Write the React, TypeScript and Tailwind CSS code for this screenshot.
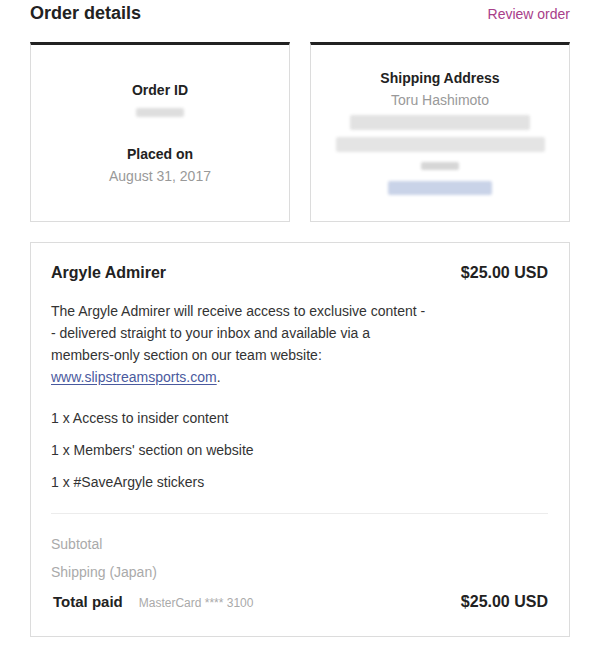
const blurBox = "rounded-[2px] blur-[1.5px]";

function InfoCard({ children }: { children: React.ReactNode }) {
  return (
    <div className="flex h-[180px] flex-1 flex-col items-center justify-center border border-t-[3px] border-[#dcdcdc] border-t-[#222]">
      {children}
    </div>
  );
}

export default function App() {
  return (
    <div className="min-h-[655px] bg-white font-['Liberation_Sans',Arial,sans-serif] text-[14px] text-[#333]">
      <div className="ml-[30px] w-[540px]">
        <div className="mt-[1px] flex items-baseline justify-between">
          <h1 className="text-[18px] font-bold leading-[24px] text-[#222]">Order details</h1>
          <a href="#" className="text-[14px] leading-[24px] text-[#a8408a]">
            Review order
          </a>
        </div>

        <div className="mt-[16px] flex gap-5">
          <InfoCard>
            <div className="font-bold leading-[22px] text-[#222]">Order ID</div>
            <div className="flex h-[22px] items-center">
              <div className={`h-[9px] w-[48px] bg-[#dedede] ${blurBox}`} />
            </div>
            <div className="mt-[20px] font-bold leading-[22px] text-[#222]">Placed on</div>
            <div className="leading-[22px] text-[#999]">August 31, 2017</div>
          </InfoCard>
          <InfoCard>
            <div className="font-bold leading-[22px] text-[#222]">Shipping Address</div>
            <div className="leading-[22px] text-[#999]">Toru Hashimoto</div>
            <div className="flex h-[22px] items-center">
              <div className={`h-[15px] w-[180px] bg-[#e2e2e2] ${blurBox}`} />
            </div>
            <div className="flex h-[22px] items-center">
              <div className={`h-[15px] w-[209px] bg-[#e4e4e4] ${blurBox}`} />
            </div>
            <div className="flex h-[22px] items-center">
              <div className={`h-[8px] w-[38px] bg-[#d6d6d6] ${blurBox}`} />
            </div>
            <div className="flex h-[22px] items-center">
              <div className={`h-[14px] w-[104px] bg-[#c9d3e8] ${blurBox}`} />
            </div>
          </InfoCard>
        </div>

        <div className="mt-5 border border-[#dcdcdc] pb-[20px] pl-5 pr-[21px] pt-[19px]">
          <div className="flex items-baseline justify-between">
            <div className="text-[16px] font-bold leading-[22px] text-[#222]">Argyle Admirer</div>
            <div className="text-[16px] font-bold leading-[22px] text-[#222]">$25.00 USD</div>
          </div>

          <p className="mt-4 leading-[22px]">
            The Argyle Admirer will receive access to exclusive content -<br />
            - delivered straight to your inbox and available via a<br />
            members-only section on our team website:<br />
            <a href="#" className="text-[#4a5a9e] underline underline-offset-2">
              www.slipstreamsports.com
            </a>
            .
          </p>

          <ul className="mt-[14px] leading-[32px]">
            <li>1 x Access to insider content</li>
            <li>1 x Members' section on website</li>
            <li>1 x #SaveArgyle stickers</li>
          </ul>

          <div className="mt-[15px] h-px bg-[#ececec]" />

          <div className="mt-[16px] leading-[28px] text-[#aaa]">
            <div>Subtotal</div>
            <div>Shipping (Japan)</div>
          </div>

          <div className="mt-[2px] flex items-baseline justify-between">
            <div className="flex items-baseline gap-4 pl-[2px]">
              <span className="text-[15px] font-bold leading-[28px] text-[#222]">Total paid</span>
              <span className="text-[12px] text-[#aaa]">MasterCard **** 3100</span>
            </div>
            <span className="text-[16px] font-bold leading-[28px] text-[#222]">$25.00 USD</span>
          </div>
        </div>
      </div>
    </div>
  );
}
